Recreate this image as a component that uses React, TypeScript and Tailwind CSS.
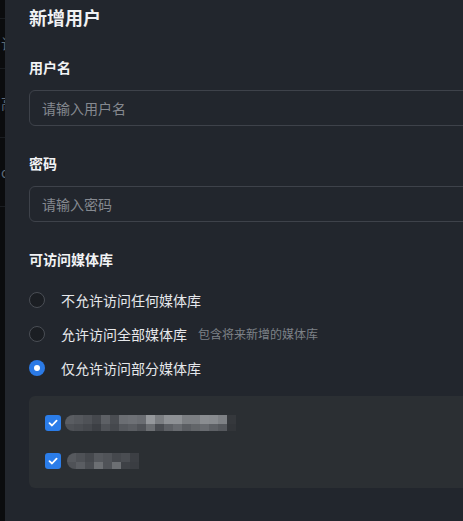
import React, { useState } from 'react';

const row1Top = ['bg-[#5a5d62]', 'bg-[#55585d]', 'bg-[#4f5257]', 'bg-[#45484d]', 'bg-[#5d6065]', 'bg-[#4a4d52]', 'bg-[#6b6e73]', 'bg-[#6e7176]', 'bg-[#6a6d72]', 'bg-[#95989c]', 'bg-[#7b7e82]', 'bg-[#8e9195]', 'bg-[#8e9195]', 'bg-[#7c7f83]', 'bg-[#7c7f83]', 'bg-[#8a8d91]', 'bg-[#888b8f]', 'bg-[#7e8185]', 'bg-[#35383c]'];
const row1Bot = ['bg-[#4e5156]', 'bg-[#4a4d52]', 'bg-[#45484d]', 'bg-[#3c3f44]', 'bg-[#4f5257]', 'bg-[#45484d]', 'bg-[#55585d]', 'bg-[#5a5d62]', 'bg-[#505358]', 'bg-[#6c6f73]', 'bg-[#4a4d52]', 'bg-[#5d6065]', 'bg-[#686b70]', 'bg-[#5a5d62]', 'bg-[#626569]', 'bg-[#686b70]', 'bg-[#5d6065]', 'bg-[#55585d]', 'bg-[#323539]'];
const row2Top = ['bg-[#56595e]', 'bg-[#4e5156]', 'bg-[#45484d]', 'bg-[#55585d]', 'bg-[#505358]', 'bg-[#45484d]', 'bg-[#4a4d52]', 'bg-[#3c3f44]'];
const row2Bot = ['bg-[#4f5257]', 'bg-[#5a5d62]', 'bg-[#4a4d52]', 'bg-[#6c6f73]', 'bg-[#505358]', 'bg-[#6c6f73]', 'bg-[#3e4146]', 'bg-[#3a3d42]'];

const Mosaic = ({ top, bottom }: { top: string[]; bottom: string[] }) => (
  <div className="flex flex-col overflow-hidden rounded-l-[8px]">
    <div className="flex">
      {top.map((c, i) => (
        <div key={i} className={`h-[9px] w-[9px] ${c}`} />
      ))}
    </div>
    <div className="flex">
      {bottom.map((c, i) => (
        <div key={i} className={`h-[7px] w-[9px] ${c}`} />
      ))}
    </div>
  </div>
);

const CheckIcon = () => (
  <svg width="10" height="10" viewBox="0 0 10 10" fill="none">
    <path d="M1.5 5.2 L4 7.5 L8.6 2.6" stroke="white" strokeWidth="1.8" strokeLinecap="round" strokeLinejoin="round" />
  </svg>
);

const options = [
  { id: 'none', label: '不允许访问任何媒体库' },
  { id: 'all', label: '允许访问全部媒体库', hint: '包含将来新增的媒体库' },
  { id: 'some', label: '仅允许访问部分媒体库' },
];

export default function App() {
  const [access, setAccess] = useState('some');

  return (
    <div
      className="flex h-[521px] w-[463px] overflow-hidden bg-[#22262d] text-[#e8eaed]"
      style={{ fontFamily: '"Noto Sans CJK SC", "Noto Sans", sans-serif' }}
    >
      {/* page behind the drawer */}
      <div className="flex w-[5px] shrink-0 flex-col overflow-hidden bg-[#0b0c0e] text-[14px] text-[#5d6a79]">
        <div className="h-[19px] shrink-0 border-b border-[#1a1d21]" />
        <div className="flex h-[50px] shrink-0 items-center whitespace-nowrap border-b border-[#1a1d21] pl-[1px]">订阅</div>
        <div className="flex h-[69px] shrink-0 items-center whitespace-nowrap border-b border-[#1a1d21] pl-[1px]">高级</div>
        <div className="flex h-[69px] shrink-0 items-center whitespace-nowrap border-b border-[#1a1d21] pl-[1px]">o</div>
      </div>

      {/* drawer */}
      <div className="w-[560px] shrink-0 pl-[24px]">
        <h2 className="mt-[3px] text-[18px] font-bold leading-[28px] text-[#f0f1f3]">新增用户</h2>

        <label className="mt-[25px] block text-[14px] font-bold leading-[22px] text-[#f2f3f5]">用户名</label>
        <input
          placeholder="请输入用户名"
          className="mt-[12px] h-[36px] w-[500px] rounded-[6px] border border-[#3e424a] bg-transparent px-[12px] text-[14px] text-[#e8eaed] outline-none placeholder:text-[#858990]"
        />

        <label className="mt-[26px] block text-[14px] font-bold leading-[22px] text-[#f2f3f5]">密码</label>
        <input
          type="password"
          placeholder="请输入密码"
          className="mt-[12px] h-[36px] w-[500px] rounded-[6px] border border-[#3e424a] bg-transparent px-[12px] text-[14px] text-[#e8eaed] outline-none placeholder:text-[#858990]"
        />

        <div className="mt-[26px] text-[14px] font-bold leading-[22px] text-[#f2f3f5]">可访问媒体库</div>

        <div className="mt-[13px] flex flex-col">
          {options.map((o) => {
            const on = access === o.id;
            return (
              <button
                key={o.id}
                onClick={() => setAccess(o.id)}
                className="flex h-[34px] items-center gap-[16px] text-left"
              >
                <span
                  className={
                    on
                      ? 'flex h-[16px] w-[16px] items-center justify-center rounded-full bg-[#2b7ae6]'
                      : 'h-[16px] w-[16px] rounded-full border border-[#4a4e55] bg-[#1b1e23]'
                  }
                >
                  {on && <span className="h-[6px] w-[6px] rounded-full bg-white" />}
                </span>
                <span className="text-[14px] text-[#e6e8eb]">{o.label}</span>
                {o.hint && <span className="-ml-[5px] text-[12px] text-[#7d8187]">{o.hint}</span>}
              </button>
            );
          })}
        </div>

        <div className="mt-[11px] flex h-[92px] w-[520px] flex-col justify-center rounded-[6px] bg-[#2b2f33] px-[16px]">
          <div className="flex h-[38px] items-center gap-[4px]">
            <span className="flex h-[16px] w-[16px] items-center justify-center rounded-[3px] bg-[#2b7de9]">
              <CheckIcon />
            </span>
            <Mosaic top={row1Top} bottom={row1Bot} />
          </div>
          <div className="flex h-[38px] items-center gap-[6px]">
            <span className="flex h-[16px] w-[16px] items-center justify-center rounded-[3px] bg-[#2b7de9]">
              <CheckIcon />
            </span>
            <Mosaic top={row2Top} bottom={row2Bot} />
          </div>
        </div>
      </div>
    </div>
  );
}
